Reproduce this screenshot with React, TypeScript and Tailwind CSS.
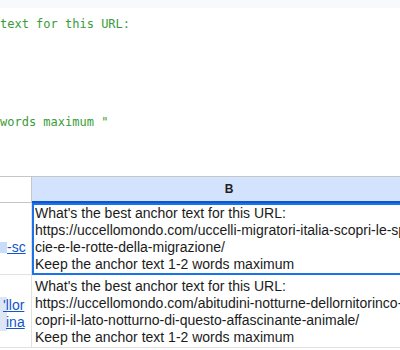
import React from "react";

const mono = { fontFamily: '"DejaVu Sans Mono", "Liberation Mono", monospace' };
const sans = { fontFamily: '"Liberation Sans", Arial, sans-serif' };

export default function App() {
  return (
    <div className="w-[400px] h-[350px] overflow-hidden bg-white flex flex-col">
      <div className="h-[8px] shrink-0 bg-[#f8f9fa]" />
      <div className="pt-[6px] text-[12px] leading-[20px] text-[#389c38] whitespace-pre" style={mono}>
        <div>text for this URL:</div>
        <div className="mt-[78px]">words maximum "</div>
      </div>
      <div className="mt-[44px] border-t border-[#c4c7c5] flex flex-col text-[14px] leading-[17px] text-[#1b1b1b]" style={sans}>
        {/* header */}
        <div className="flex h-[26px] shrink-0">
          <div className="w-[32px] shrink-0 bg-white border-r border-b border-[#c4c7c5]" />
          <div className="w-[394px] shrink-0 bg-[#d3e3fd] border-b-2 border-[#0b57d0] flex items-center justify-center text-[12px] font-bold text-[#1f1f1f]">
            B
          </div>
        </div>
        {/* row 1 */}
        <div className="flex h-[72px] shrink-0">
          <div className="w-[32px] shrink-0 border-r border-b border-[#e1e1e1] overflow-hidden pt-[36px]">
            <div className="flex items-center h-[17px]">
              <span className="w-[7px] h-[11px] bg-[#c9dcf8] shrink-0" />
              <span className="text-[#1155cc] underline">-sc</span>
            </div>
          </div>
          <div className="w-[394px] shrink-0 border-2 border-[#1a73e8] pl-[1px] overflow-hidden whitespace-nowrap">
            <div>What's the best anchor text for this URL:</div>
            <div>https://uccellomondo.com/uccelli-migratori-italia-scopri-le-spe</div>
            <div>cie-e-le-rotte-della-migrazione/</div>
            <div>Keep the anchor text 1-2 words maximum</div>
          </div>
        </div>
        {/* row 2 */}
        <div className="flex h-[73px] shrink-0">
          <div className="w-[32px] shrink-0 border-r border-b border-[#e1e1e1] overflow-hidden pt-[22px]">
            <div className="flex items-center h-[17px]">
              <span className="w-[7px] h-[17px] bg-[#dde6f5] shrink-0" />
              <span className="text-[#1155cc] underline -ml-[4px]">'llor</span>
            </div>
            <div className="flex items-center h-[17px]">
              <span className="w-[7px] h-[17px] bg-[#dde6f5] shrink-0" />
              <span className="text-[#1155cc] underline -ml-[1px]">ina</span>
            </div>
          </div>
          <div className="w-[394px] shrink-0 border-b border-[#e1e1e1] pl-[3px] pt-[3px] overflow-hidden whitespace-nowrap">
            <div>What's the best anchor text for this URL:</div>
            <div>https://uccellomondo.com/abitudini-notturne-dellornitorinco-s</div>
            <div>copri-il-lato-notturno-di-questo-affascinante-animale/</div>
            <div>Keep the anchor text 1-2 words maximum</div>
          </div>
        </div>
      </div>
    </div>
  );
}
